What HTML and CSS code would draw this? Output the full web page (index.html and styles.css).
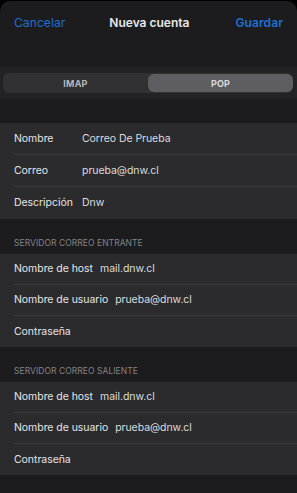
FILE: index.html
```html
<!DOCTYPE html>
<html lang="es">
<head>
<meta charset="utf-8">
<title>Nueva cuenta</title>
<link rel="stylesheet" href="styles.css">
</head>
<body>
<div class="sheet">
  <header class="nav">
    <span class="nav-btn">Cancelar</span>
    <span class="nav-title">Nueva cuenta</span>
    <span class="nav-btn strong">Guardar</span>
  </header>
  <div class="seg-strip">
    <div class="segmented">
      <div class="seg">IMAP</div>
      <div class="seg active">POP</div>
    </div>
  </div>
  <div class="spacer"></div>
  <section class="group first">
    <div class="row"><span class="label">Nombre</span><span class="value">Correo De Prueba</span></div>
    <div class="row"><span class="label">Correo</span><span class="value">prueba@dnw.cl</span></div>
    <div class="row"><span class="label">Descripción</span><span class="value">Dnw</span></div>
  </section>
  <div class="section-head">SERVIDOR CORREO ENTRANTE</div>
  <section class="group">
    <div class="row"><span class="label">Nombre de host</span><span class="value">mail.dnw.cl</span></div>
    <div class="row"><span class="label">Nombre de usuario</span><span class="value">prueba@dnw.cl</span></div>
    <div class="row"><span class="label">Contraseña</span></div>
  </section>
  <div class="section-head">SERVIDOR CORREO SALIENTE</div>
  <section class="group">
    <div class="row"><span class="label">Nombre de host</span><span class="value">mail.dnw.cl</span></div>
    <div class="row"><span class="label">Nombre de usuario</span><span class="value">prueba@dnw.cl</span></div>
    <div class="row"><span class="label">Contraseña</span></div>
  </section>
</div>
</body>
</html>
```
FILE: styles.css
```css
* { box-sizing: border-box; }
html, body { margin: 0; padding: 0; background: #000; }
body {
  font-family: Inter, "Noto Sans", "Liberation Sans", sans-serif;
  color: #e6e6e8;
  width: 297px;
  height: 493px;
  overflow: hidden;
}
.sheet {
  margin-top: 1px;
  background: #1c1c1e;
  border-radius: 10px 10px 0 0;
  height: 492px;
  overflow: hidden;
}
.nav {
  height: 66px;
  display: flex;
  justify-content: space-between;
  align-items: flex-start;
  padding: 14px 14px 0 14px;
  font-size: 12px;
  line-height: 15px;
}
.nav-btn { color: #1f6fd1; font-weight: 400; letter-spacing: 0.1px; }
.nav-btn.strong { font-weight: 600; }
.nav-title { color: #e8e8ea; font-weight: 600; margin-right: 2px; }
.seg-strip {
  background: #232325;
  height: 32px;
  padding: 6px 4px 0 3px;
}
.segmented {
  display: flex;
  height: 20px;
  background: #313133;
  border-radius: 6px;
}
.seg {
  flex: 1;
  display: flex;
  align-items: center;
  justify-content: center;
  font-size: 9px;
  font-weight: 700;
  color: #b9b9bd;
  letter-spacing: 0.2px;
  border-radius: 6px;
}
.seg.active {
  background: #5e5e62;
  color: #dcdcdf;
  margin: 1px 0;
}
.spacer { height: 24px; }
.group { background: #2b2b2d; }
.row {
  height: 31px;
  display: flex;
  align-items: center;
  gap: 7px;
  margin-left: 14px;
  font-size: 10.5px;
  line-height: 14px;
  letter-spacing: -0.05px;
  border-bottom: 1px solid #3a3a3c;
}
.row:last-child { border-bottom: none; }
.group.first .row { height: 32px; gap: 0; }
.group.first .label { width: 68px; }
.label { color: #e4e4e6; white-space: nowrap; }
.value { color: #dcdcde; white-space: nowrap; }
.section-head {
  height: 35px;
  display: flex;
  align-items: flex-end;
  padding: 0 14px 5px;
  font-size: 8.5px;
  line-height: 11px;
  color: #838387;
  letter-spacing: 0.05px;
}
```
